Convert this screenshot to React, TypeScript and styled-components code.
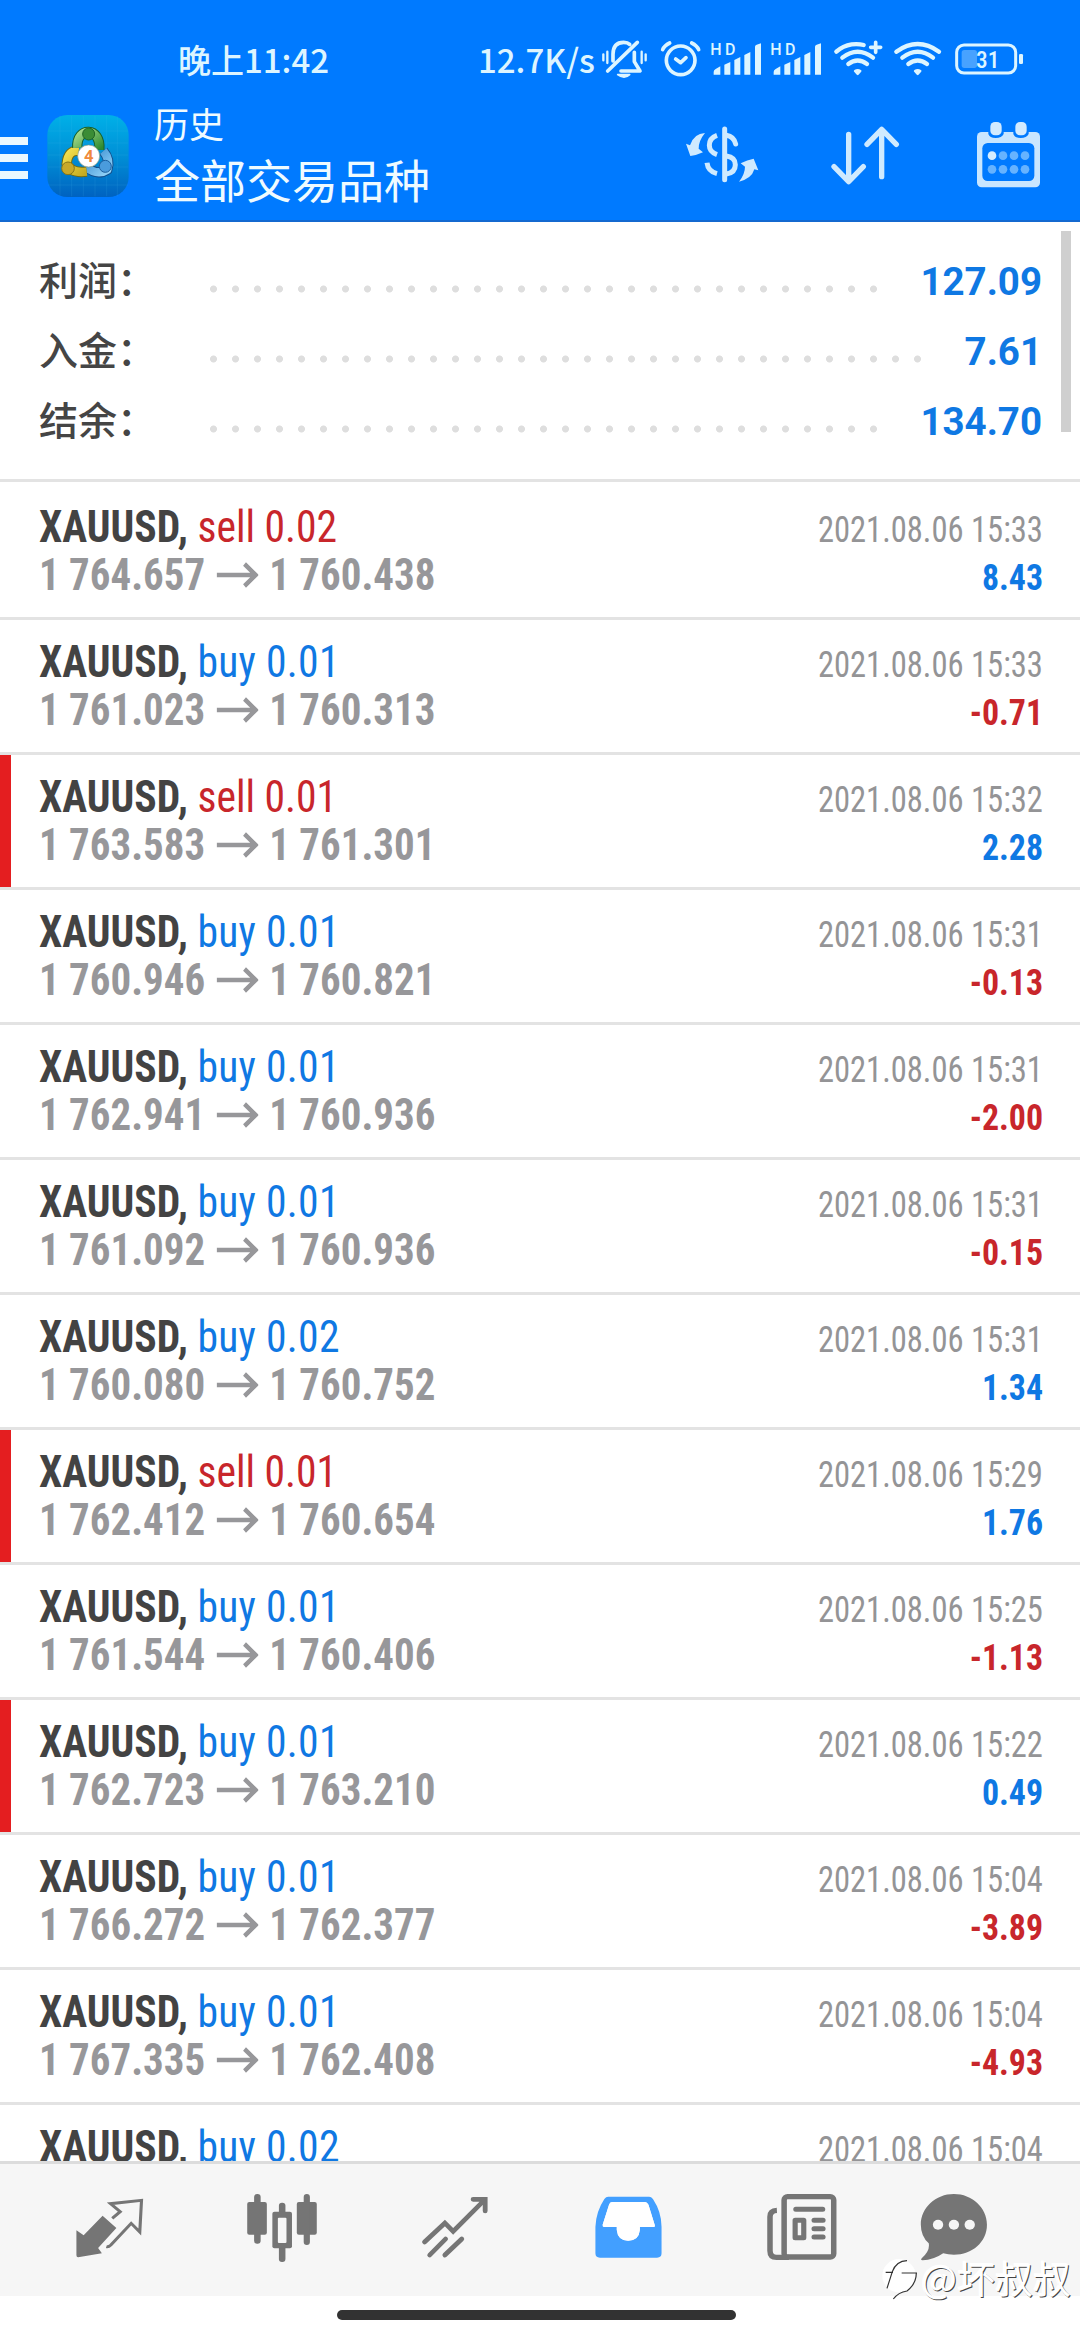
import React from "react";
import styled, { createGlobalStyle } from "styled-components";

const GlobalStyle = createGlobalStyle`
  * { box-sizing: border-box; }
  html, body { margin: 0; padding: 0; background: #fff; }
`;

const CJK = `"Noto Sans CJK SC", sans-serif`;
const CONDENSED = `"Roboto Condensed", Roboto, sans-serif`;
const INK = "#ddf5ff";
const BLUE = "#0f78e3";
const RED = "#c8262b";

const Screen = styled.div`
  position: relative;
  display: flex;
  flex-direction: column;
  width: 1080px;
  height: 2340px;
  overflow: hidden;
  background: #fff;
`;

const Header = styled.header`
  display: flex;
  flex-direction: column;
  height: 222px;
  background: #007aff;
  border-bottom: 2px solid #1469d0;
`;

const StatusBar = styled.div`
  display: flex;
  align-items: flex-end;
  height: 90px;
  padding-left: 178px;
  color: ${INK};
  font-family: ${CJK};
  font-weight: 500;
  font-size: 33px;
`;

const Clock = styled.span`
  width: 300px;
  line-height: 62px;
  white-space: nowrap;
`;

const Speed = styled.span`
  width: 122px;
  line-height: 62px;
  white-space: nowrap;
`;

const AppBar = styled.div`
  display: flex;
  height: 130px;
`;

const MenuButton = styled.div`
  display: flex;
  flex-direction: column;
  gap: 9px;
  width: 47px;
  padding-top: 47px;
`;

const MenuLine = styled.span`
  width: 28px;
  height: 8px;
  background: #eaf8ff;
`;

const Logo = styled.svg`
  display: block;
  width: 82px;
  height: 82px;
  margin-top: 25px;
`;

const Titles = styled.div`
  display: flex;
  flex-direction: column;
  width: 541px;
  padding-left: 25px;
  padding-top: 11px;
  color: #effbff;
  font-family: ${CJK};
`;

const Caption = styled.span`
  font-size: 35px;
  line-height: 44px;
  font-weight: 400;
`;

const Title = styled.span`
  font-size: 46px;
  line-height: 66px;
  font-weight: 400;
`;

const Main = styled.main`
  position: relative;
  height: 1939px;
  overflow: hidden;
`;

const Summary = styled.section`
  display: flex;
  flex-direction: column;
  height: 260px;
  padding: 23px 38px 0 39px;
  border-bottom: 3px solid #e3e3e3;
`;

const SummaryRow = styled.div`
  display: flex;
  align-items: center;
  height: 70px;
`;

const SummaryLabel = styled.span`
  width: 171px;
  padding-bottom: 4px;
  color: #454545;
  font-family: ${CJK};
  font-size: 39px;
  line-height: 66px;
  font-weight: 500;
`;

const Leader = styled.span<{ $dots: number }>`
  width: ${(p) => p.$dots * 22}px;
  height: 8px;
  margin-top: 17px;
  background: radial-gradient(circle at 3.5px 4px, #dedede 3.1px, transparent 3.9px) 0 0 / 22px 8px;
`;

const SummaryValue = styled.span`
  margin-left: auto;
  padding-top: 4px;
  color: ${BLUE};
  font-family: Roboto, sans-serif;
  font-size: 38.5px;
  line-height: 66px;
  font-weight: 700;
`;

const Scrollbar = styled.div`
  position: absolute;
  top: 9px;
  right: 9px;
  width: 10px;
  height: 201px;
  background: #cfcfcf;
`;

const DealRow = styled.article<{ $marked?: boolean }>`
  display: flex;
  justify-content: space-between;
  height: 135px;
  padding: 21px 37px 0 39px;
  border-bottom: 3px solid #e3e3e3;
  box-shadow: ${(p) => (p.$marked ? "inset 11px 0 0 #e41e20" : "none")};
  &:first-of-type { height: 138px; }
  & + & { padding-top: 18px; }
`;

const Side = styled.div<{ $end?: boolean }>`
  display: flex;
  flex-direction: column;
  align-items: ${(p) => (p.$end ? "flex-end" : "flex-start")};
`;

/* The face is tightened horizontally a little beyond its narrowest width. */
const Line = styled.div<{ $scale: number; $end?: boolean }>`
  display: flex;
  align-items: center;
  height: 48px;
  white-space: nowrap;
  transform: scaleX(${(p) => p.$scale});
  transform-origin: ${(p) => (p.$end ? "right" : "left")} center;
`;

const Text = styled.span<{ $size: number; $bold?: boolean; $color: string; $drop?: number; $track?: number }>`
  color: ${(p) => p.$color};
  font-family: ${CONDENSED};
  font-stretch: 75%;
  font-size: ${(p) => p.$size}px;
  font-weight: ${(p) => (p.$bold ? 700 : 400)};
  letter-spacing: ${(p) => p.$track || 0}px;
  line-height: 48px;
  padding-top: ${(p) => p.$drop || 0}px;
  white-space: pre;
`;

const Arrow = styled.svg`
  width: 45px;
  height: 26px;
  margin: 0 12px;
`;

const TabBar = styled.nav`
  display: flex;
  height: 135px;
  padding-left: 22px;
  background: #f6f6f6;
  border-top: 3px solid #dcdcdc;
`;

const Tab = styled.div`
  display: flex;
  justify-content: center;
  width: 173px;
  padding-top: 21px;
`;

const TabSvg = styled.svg`
  width: 108px;
  height: 90px;
`;

const HomeArea = styled.footer`
  display: flex;
  justify-content: center;
  padding-top: 14px;
`;

const HomeBar = styled.div`
  width: 399px;
  height: 10px;
  margin-right: 7px;
  border-radius: 5px;
  background: #323232;
`;

const Watermark = styled.div`
  position: absolute;
  left: 881px;
  top: 2249px;
  display: flex;
  align-items: center;
  color: #fff;
  font-family: ${CJK};
  font-size: 38px;
  line-height: 56px;
  font-weight: 400;
  text-shadow: 1px 1px 0 #444, -1px -1px 0 #fff;
  white-space: nowrap;
`;

type Deal = {
  side: "buy" | "sell";
  volume: string;
  open: string;
  close: string;
  time: string;
  profit: string;
  marked?: boolean;
};

const deals: Deal[] = [
  { side: "sell", volume: "0.02", open: "1 764.657", close: "1 760.438", time: "15:33", profit: "8.43" },
  { side: "buy", volume: "0.01", open: "1 761.023", close: "1 760.313", time: "15:33", profit: "-0.71" },
  { side: "sell", volume: "0.01", open: "1 763.583", close: "1 761.301", time: "15:32", profit: "2.28", marked: true },
  { side: "buy", volume: "0.01", open: "1 760.946", close: "1 760.821", time: "15:31", profit: "-0.13" },
  { side: "buy", volume: "0.01", open: "1 762.941", close: "1 760.936", time: "15:31", profit: "-2.00" },
  { side: "buy", volume: "0.01", open: "1 761.092", close: "1 760.936", time: "15:31", profit: "-0.15" },
  { side: "buy", volume: "0.02", open: "1 760.080", close: "1 760.752", time: "15:31", profit: "1.34" },
  { side: "sell", volume: "0.01", open: "1 762.412", close: "1 760.654", time: "15:29", profit: "1.76", marked: true },
  { side: "buy", volume: "0.01", open: "1 761.544", close: "1 760.406", time: "15:25", profit: "-1.13" },
  { side: "buy", volume: "0.01", open: "1 762.723", close: "1 763.210", time: "15:22", profit: "0.49", marked: true },
  { side: "buy", volume: "0.01", open: "1 766.272", close: "1 762.377", time: "15:04", profit: "-3.89" },
  { side: "buy", volume: "0.01", open: "1 767.335", close: "1 762.408", time: "15:04", profit: "-4.93" },
  { side: "buy", volume: "0.02", open: "", close: "", time: "15:04", profit: "" },
];

const summary = [
  { label: "利润：", dots: 31, value: "127.09" },
  { label: "入金：", dots: 33, value: "7.61" },
  { label: "结余：", dots: 31, value: "134.70" },
];

const Glyphs = styled.text`
  font-family: ${CONDENSED};
  font-stretch: 75%;
  font-weight: 500;
`;

function Signal({ x }: { x: number }) {
  return (
    <g transform={`translate(${x} 0)`} fill={INK}>
      <text x="360" y="75" fontSize="48" textLength="75" fontFamily="Roboto, sans-serif" fontWeight="500">HD</text>
      <path d="M370 135v-8q0-6 6-9l14-8v25zM402 135v-30l18-8v38zM432 135v-44l18-9v53zM462 135v-59l18-9v68zM494 135v-84q0-4 5-6l13-4v94z" />
    </g>
  );
}

function Wifi({ x, plus }: { x: number; plus?: boolean }) {
  return (
    <g transform={`translate(${x} 0)`} fill="none" stroke={INK} strokeWidth="13" strokeLinecap="round">
      <path d={plus ? "M6 66Q26 48 52 44Q74 42 88 46" : "M6 66Q70 20 134 66"} />
      <path d="M24 84Q70 48 116 84" />
      <path d="M42 103Q70 82 98 103" />
      <path d="M62 124Q70 119 78 124L70 133z" fill={INK} strokeWidth="7" strokeLinejoin="round" />
      {plus && <path d="M124 38v30M109 53h30" strokeWidth="11" />}
    </g>
  );
}

const StatusSvg = styled.svg`
  width: 480px;
  height: 60px;
`;

function StatusIcons() {
  return (
    <StatusSvg viewBox="29 1 1440 180">
      <g fill="none" stroke={INK} strokeWidth="11" strokeLinecap="round" strokeLinejoin="round">
        <path d="M39 74v18M51 66v34M154 66v34M166 74v18" strokeWidth="7" />
        <path d="M52 124L141 38M68 94V74Q68 38 100 38Q112 38 118 44M132 68V96L149 124H92" />
        <path d="M82 135Q102 150 118 135z" fill={INK} strokeWidth="5" />
        <circle cx="271" cy="92" r="43" />
        <path d="M217 60Q222 48 238 40M325 60Q320 48 304 40M256 88l15 11 16-15" />
      </g>
      <Signal x={0} />
      <Signal x={180} />
      <Wifi x={732} plus />
      <Wifi x={912} />
      <rect x="1099" y="46" width="177" height="84" rx="22" fill="none" stroke={INK} strokeWidth="9" />
      <rect x="1114" y="61" width="46" height="54" rx="8" fill="#48a2ff" />
      <rect x="1286" y="73" width="12" height="30" rx="4" fill={INK} />
      <Glyphs x="1157" y="115" fontSize="70" fill={INK}>31</Glyphs>
    </StatusSvg>
  );
}

const ActionSvg = styled.svg`
  width: 390px;
  height: 100px;
  margin-top: 20px;
  flex: none;
`;

function HeaderActions() {
  const c = "#cfeaff";
  return (
    <ActionSvg viewBox="0 0 1170 300">
      <g fill="none" stroke={c} strokeLinecap="round" strokeLinejoin="round">
        <path d="M164 57V209" strokeWidth="15" />
        <path d="M141 76Q118 84 118 106Q118 126 141 134M111 158Q114 184 141 191" strokeWidth="15" strokeLinecap="butt" />
        <path d="M169 76Q192 80 197 102M169 138Q196 142 196 164Q196 188 169 192" strokeWidth="15" />
        <path d="M105 69Q72 70 60 106L48 101L61 138Q80 136 99 127L86 116Q86 92 105 69z" fill={c} stroke="none" />
        <path d="M207 215Q245 206 253 178L265 181L251 146Q232 149 212 160L225 170Q225 192 207 215z" fill={c} stroke="none" />
        <path d="M536 73V212M492 170L536 215L580 170M635 200V60M591 103L635 58L679 103" strokeWidth="16" />
      </g>
      <rect x="921" y="66" width="189" height="166" rx="14" fill="#c9e6ff" />
      <rect x="937" y="99" width="156" height="114" rx="16" fill="#007aff" />
      <path d="M955 66v6q4 12 22 12t24-12v-6zM1030 66v6q4 12 22 12t24-12v-6z" fill="#007aff" />
      <rect x="961" y="36" width="34" height="40" rx="14" fill="#d3ebff" />
      <rect x="1036" y="36" width="34" height="40" rx="14" fill="#d3ebff" />
      {[966, 999, 1032, 1065].map((x) =>
        [137, 178].map((y) => (
          <circle key={`${x}-${y}`} cx={x} cy={y} r="13" fill={x === 966 && y === 137 ? "#d6edff" : "#66b3ff"} />
        ))
      )}
    </ActionSvg>
  );
}

function AppLogo() {
  return (
    <Logo viewBox="22 14 244 246">
      <defs>
        <linearGradient id="sky" x1="0" y1="0" x2="0" y2="1">
          <stop offset="0" stopColor="#00b0e8" />
          <stop offset="0.5" stopColor="#008fd6" />
          <stop offset="1" stopColor="#0062c0" />
        </linearGradient>
        <linearGradient id="green" x1="0" y1="0" x2="1" y2="1">
          <stop offset="0" stopColor="#a6dc8c" />
          <stop offset="1" stopColor="#2e8a30" />
        </linearGradient>
        <linearGradient id="gold" x1="0" y1="0" x2="1" y2="1">
          <stop offset="0" stopColor="#f4e04e" />
          <stop offset="1" stopColor="#c4aa20" />
        </linearGradient>
        <linearGradient id="azure" x1="0" y1="0" x2="1" y2="1">
          <stop offset="0" stopColor="#2f86cc" />
          <stop offset="1" stopColor="#8fd0f6" />
        </linearGradient>
      </defs>
      <rect x="22" y="14" width="244" height="246" rx="60" fill="url(#sky)" />
      <path d="M60 16V258M95 16V258M130 16V258M165 16V258M200 16V258M232 16V258M24 62H264M24 98H264M24 134H264M24 170H264M24 224H264" stroke="#4cc4f0" strokeOpacity="0.2" strokeWidth="2" />
      <g fill="none">
        <path d="M190 122Q212 148 202 178Q172 198 136 168" stroke="#124f8c" strokeWidth="31" />
        <path d="M190 122Q212 148 202 178Q172 198 136 168" stroke="url(#azure)" strokeWidth="25" />
        <path d="M116 122Q84 118 80 160Q92 190 140 184" stroke="#6f6a14" strokeWidth="31" />
        <path d="M116 122Q84 118 80 160Q92 190 140 184" stroke="url(#gold)" strokeWidth="25" />
        <path d="M112 112C108 48 184 48 178 118" stroke="#17602a" strokeWidth="31" />
        <path d="M112 112C108 48 184 48 178 118" stroke="url(#green)" strokeWidth="25" />
      </g>
      <circle cx="146" cy="71" r="18" fill="#3b8c35" stroke="#1f6423" strokeWidth="3" />
      <circle cx="84" cy="174" r="19" fill="#c8a92a" stroke="#85751a" strokeWidth="3" />
      <circle cx="196" cy="168" r="18" fill="#4a9bdc" stroke="#1d5f9e" strokeWidth="3" />
      <circle cx="146" cy="137" r="33" fill="#fff" stroke="#8a9a80" strokeWidth="2" />
      <text x="146" y="155" fontSize="50" textAnchor="middle" fontFamily="Roboto, sans-serif" fontWeight="700" fill="#f08a3c">4</text>
    </Logo>
  );
}

function TabIcon({ center, children }: { center: number; children: React.ReactNode }) {
  return (
    <Tab>
      <TabSvg viewBox={`${center - 156.8} 315 313.6 270`} preserveAspectRatio="none">{children}</TabSvg>
    </Tab>
  );
}

const GREY = "#757575";

function Tabs() {
  return (
    <TabBar>
      <TabIcon center={313.6}>
        <path d="M295 407L335 444L282 504L293 520L224 532Q219 532 219 526V451L240 466z" fill={GREY} />
        <path d="M323 415L346 395L318 371L408 361L403 456L378 430L319 495Q312 502 306 500" fill="none" stroke={GREY} strokeWidth="9" />
      </TabIcon>
      <TabIcon center={816}>
        <g fill={GREY}>
          <rect x="715" y="366" width="57" height="98" rx="6" />
          <rect x="735" y="342" width="19" height="149" rx="9" />
          <rect x="859" y="366" width="58" height="98" rx="6" />
          <rect x="879" y="342" width="18" height="153" rx="9" />
          <rect x="807" y="368" width="19" height="178" rx="9" />
          <rect x="788" y="395" width="57" height="110" rx="6" />
        </g>
        <rect x="804" y="413" width="25" height="76" rx="3" fill="#f6f6f6" />
      </TabIcon>
      <TabIcon center={1318.4}>
        <path d="M1230 486L1289 429L1313 454L1404 360M1371 358H1406V393M1245 525L1291 477M1289 525L1338 477" fill="none" stroke={GREY} strokeWidth="14" strokeLinecap="round" strokeLinejoin="miter" />
      </TabIcon>
      <TabIcon center={252.6}>
        <path fillRule="evenodd" fill="#429fff" d="M195 350H314Q320 350 325 357Q350 396 350 440V520Q350 533 337 533H171Q158 533 158 520V440Q160 394 184 357Q189 350 195 350zM207 366Q201 366 198 373L179 434Q178 441 184 441H220V450Q223 482 253 482Q284 482 287 450V441H326Q332 441 330 434L312 374Q308 366 302 366z" />
        <path fill="#fff" d="M207 366Q201 366 198 373L179 434Q178 441 184 441H220V450Q223 482 253 482Q284 482 287 450V441H326Q332 441 330 434L312 374Q308 366 302 366z" />
      </TabIcon>
      <TabIcon center={755}>
        <rect x="706" y="350" width="144" height="181" rx="10" fill="none" stroke={GREY} strokeWidth="16" />
        <path d="M685 391Q665 392 665 410V512Q665 532 684 532H720" fill="none" stroke={GREY} strokeWidth="16" />
        <path d="M740 388H818M793 421H819M793 446H819M793 471H819" stroke={GREY} strokeWidth="15" strokeLinecap="round" />
        <rect x="738" y="421" width="25" height="52" fill="none" stroke={GREY} strokeWidth="15" strokeLinejoin="round" />
      </TabIcon>
      <TabIcon center={1257.4}>
        <path d="M1199 342C1252 342 1295 383 1295 434C1295 486 1252 524 1199 524Q1182 524 1168 520Q1140 540 1108 541Q1100 541 1107 533Q1130 512 1126 490Q1103 468 1103 434C1103 383 1146 342 1199 342z" fill={GREY} />
        <circle cx="1153" cy="434" r="15" fill="#f6f6f6" />
        <circle cx="1199" cy="434" r="15" fill="#f6f6f6" />
        <circle cx="1245" cy="434" r="15" fill="#f6f6f6" />
      </TabIcon>
    </TabBar>
  );
}

const MarkSvg = styled.svg`
  width: 40px;
  height: 48px;
`;

function DealItem({ deal }: { deal: Deal }) {
  const sell = deal.side === "sell";
  return (
    <DealRow $marked={deal.marked}>
      <Side>
        <Line $scale={0.945}>
          <Text $size={44} $bold $color="#434343">{"XAUUSD, "}</Text>
          <Text $size={44} $track={sell ? 0 : 0.3} $color={sell ? RED : BLUE}>{`${deal.side} ${deal.volume}`}</Text>
        </Line>
        {deal.open && (
          <Line $scale={0.93}>
            <Text $size={44} $bold $color="#97979a">{deal.open}</Text>
            <Arrow viewBox="0 0 45 26">
              <path d="M0 13H42M30 2L42 13L30 24" fill="none" stroke="#97979a" strokeWidth="4.6" />
            </Arrow>
            <Text $size={44} $bold $color="#97979a">{deal.close}</Text>
          </Line>
        )}
      </Side>
      <Side $end>
        <Line $scale={0.904} $end>
          <Text $size={36} $drop={6} $color="#949496">{`2021.08.06 ${deal.time}`}</Text>
        </Line>
        {deal.profit && (
          <Line $scale={0.94} $end>
            <Text $size={36} $bold $drop={6} $color={deal.profit.startsWith("-") ? RED : BLUE}>{deal.profit}</Text>
          </Line>
        )}
      </Side>
    </DealRow>
  );
}

export default function App() {
  return (
    <Screen>
      <GlobalStyle />
      <Header>
        <StatusBar>
          <Clock>晚上11:42</Clock>
          <Speed>12.7K/s</Speed>
          <StatusIcons />
        </StatusBar>
        <AppBar>
          <MenuButton>
            <MenuLine />
            <MenuLine />
            <MenuLine />
          </MenuButton>
          <AppLogo />
          <Titles>
            <Caption>历史</Caption>
            <Title>全部交易品种</Title>
          </Titles>
          <HeaderActions />
        </AppBar>
      </Header>
      <Main>
        <Summary>
          {summary.map((s) => (
            <SummaryRow key={s.label}>
              <SummaryLabel>{s.label}</SummaryLabel>
              <Leader $dots={s.dots} />
              <SummaryValue>{s.value}</SummaryValue>
            </SummaryRow>
          ))}
        </Summary>
        {deals.map((d, i) => (
          <DealItem key={i} deal={d} />
        ))}
        <Scrollbar />
      </Main>
      <Tabs />
      <HomeArea>
        <HomeBar />
      </HomeArea>
      <Watermark>
        <MarkSvg viewBox="30 20 120 144">
          <circle cx="84" cy="88" r="50" fill="#fff" />
          <path d="M48 126L64 76Q76 44 108 43M44 78H66M92 80H138M136 80Q136 112 108 134Q82 138 67 158" fill="none" stroke="#333" strokeWidth="3.5" />
        </MarkSvg>
        @坏叔叔
      </Watermark>
    </Screen>
  );
}
